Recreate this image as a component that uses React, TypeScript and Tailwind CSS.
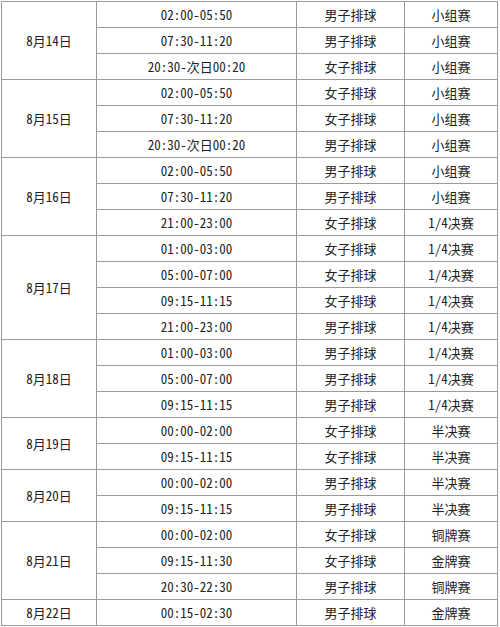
import React from "react";

type Game = { time: string; team: string; stage: string };
type Day = { date: string; games: Game[] };

const M = "男子排球";
const W = "女子排球";

const schedule: Day[] = [
  {
    date: "8月14日",
    games: [
      { time: "02:00-05:50", team: M, stage: "小组赛" },
      { time: "07:30-11:20", team: M, stage: "小组赛" },
      { time: "20:30-次日00:20", team: W, stage: "小组赛" },
    ],
  },
  {
    date: "8月15日",
    games: [
      { time: "02:00-05:50", team: W, stage: "小组赛" },
      { time: "07:30-11:20", team: W, stage: "小组赛" },
      { time: "20:30-次日00:20", team: M, stage: "小组赛" },
    ],
  },
  {
    date: "8月16日",
    games: [
      { time: "02:00-05:50", team: M, stage: "小组赛" },
      { time: "07:30-11:20", team: M, stage: "小组赛" },
      { time: "21:00-23:00", team: W, stage: "1/4决赛" },
    ],
  },
  {
    date: "8月17日",
    games: [
      { time: "01:00-03:00", team: W, stage: "1/4决赛" },
      { time: "05:00-07:00", team: W, stage: "1/4决赛" },
      { time: "09:15-11:15", team: W, stage: "1/4决赛" },
      { time: "21:00-23:00", team: M, stage: "1/4决赛" },
    ],
  },
  {
    date: "8月18日",
    games: [
      { time: "01:00-03:00", team: M, stage: "1/4决赛" },
      { time: "05:00-07:00", team: M, stage: "1/4决赛" },
      { time: "09:15-11:15", team: M, stage: "1/4决赛" },
    ],
  },
  {
    date: "8月19日",
    games: [
      { time: "00:00-02:00", team: W, stage: "半决赛" },
      { time: "09:15-11:15", team: W, stage: "半决赛" },
    ],
  },
  {
    date: "8月20日",
    games: [
      { time: "00:00-02:00", team: M, stage: "半决赛" },
      { time: "09:15-11:15", team: M, stage: "半决赛" },
    ],
  },
  {
    date: "8月21日",
    games: [
      { time: "00:00-02:00", team: W, stage: "铜牌赛" },
      { time: "09:15-11:30", team: W, stage: "金牌赛" },
      { time: "20:30-22:30", team: M, stage: "铜牌赛" },
    ],
  },
  {
    date: "8月22日",
    games: [{ time: "00:15-02:30", team: M, stage: "金牌赛" }],
  },
];

const spans: Record<number, string> = {
  1: "row-span-1",
  2: "row-span-2",
  3: "row-span-3",
  4: "row-span-4",
};

const cell = "bg-white flex items-center justify-center h-[25px]";

export default function App() {
  return (
    <div className="min-h-[627px] bg-white pt-px pl-px overflow-hidden">
      <div
        className="grid w-[497px] grid-cols-[94px_199px_107px_92px] auto-rows-[25px] gap-px border border-[#9a9a9a] bg-[#9a9a9a] text-[13px] font-light leading-none text-[#222]"
        style={{ fontFamily: '"Noto Sans Mono CJK SC", "Noto Sans CJK SC", "DejaVu Sans", sans-serif' }}
      >
        {schedule.map((day) => (
          <React.Fragment key={day.date}>
            <div className={`bg-white flex items-center justify-center ${spans[day.games.length]}`}>
              {day.date}
            </div>
            {day.games.map((g, i) => (
              <React.Fragment key={i}>
                <div className={`${cell} col-start-2`}>{g.time}</div>
                <div className={cell}>{g.team}</div>
                <div className={cell}>{g.stage}</div>
              </React.Fragment>
            ))}
          </React.Fragment>
        ))}
      </div>
    </div>
  );
}
